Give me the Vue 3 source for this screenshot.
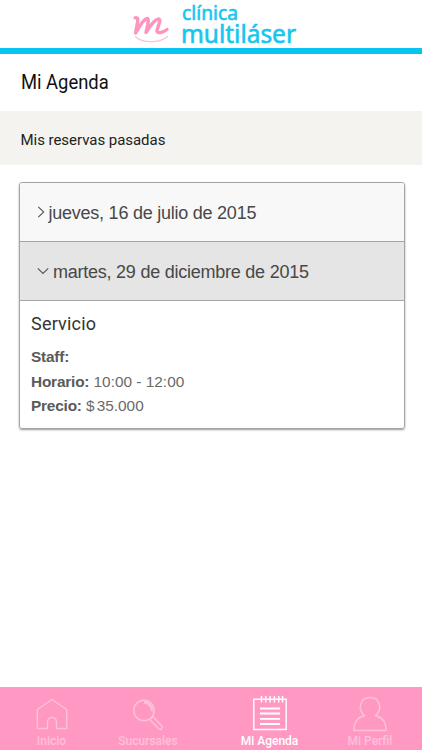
<template>
  <div class="app-screen">
    <header class="brand-bar">
      <svg class="brand-logo" viewBox="0 0 190 48" role="img" aria-label="clínica multiláser">
        <path class="brand-m" d="M15 17.800 C17.800 17.300 18.200 18.500 17.600 22 L15.600 33 C19 27 23 19.500 27 18.500 C30 18.200 27 27 26 32.500 C30 26 35 19 39 19 C41.500 20 37 28 37 31 C38 34 43 32.500 47 29.500" />
        <path class="brand-smile" d="M15 36.500 C22 43 39 44 48 36" />
        <text x="62" y="20" class="brand-small" textLength="56" lengthAdjust="spacingAndGlyphs">clínica</text>
        <text x="61" y="42.800" class="brand-large" textLength="115" lengthAdjust="spacingAndGlyphs">multiláser</text>
      </svg>
    </header>

    <h1 class="page-title"><span class="page-title-text">Mi Agenda</span></h1>
    <div class="section-bar">Mis reservas pasadas</div>

    <main class="content">
      <div class="accordion">
        <div v-for="(item, idx) in reservas" :key="item.fecha" class="accordion-item">
          <button class="accordion-header" :class="{ open: abierta === idx }" @click="toggle(idx)">
            <svg v-if="abierta === idx" class="chevron-down" viewBox="0 0 12 8">
              <path d="M.8 1.300 L6 6.500 L11.200 1.300" />
            </svg>
            <svg v-else class="chevron-right" viewBox="0 0 8 12">
              <path d="M1.300 .8 L6.700 6 L1.300 11.200" />
            </svg>
            <span class="fecha">{{ item.fecha }}</span>
          </button>
          <div v-if="abierta === idx" class="accordion-body">
            <h2>Servicio</h2>
            <p><b>Staff:</b> {{ item.staff }}</p>
            <p><b>Horario:</b> {{ item.horario }}</p>
            <p><b>Precio:</b> <span class="peso">$</span>{{ item.precio }}</p>
          </div>
        </div>
      </div>
    </main>

    <nav class="tab-bar">
      <a
        v-for="tab in tabs"
        :key="tab.id"
        class="tab"
        :class="{ active: tab.id === activeTab }"
        @click="activeTab = tab.id"
      >
        <svg v-if="tab.id === 'inicio'" viewBox="0 0 36 38">
          <path d="M3.300 33.500 V14.500 L18 4.500 L32.700 14.500 V33.500 H22.500 V27 C22.500 21 13.500 21 13.500 27 V33.500 Z" />
        </svg>
        <svg v-else-if="tab.id === 'sucursales'" viewBox="0 0 36 38">
          <circle cx="14" cy="15.500" r="10.200" />
          <path d="M14 7 C19 8 22 11 22 16" class="glare" />
          <path d="M19.800 24.500 L23 21.500 L31.800 31 C33.300 33 31 35.500 29 34 Z" />
        </svg>
        <svg v-else-if="tab.id === 'agenda'" viewBox="0 0 36 38">
          <path d="M1.800 4.300 H34.200 V34.500 H1.800 Z" />
          <path d="M9.500 1 V7.500 M13.800 1 V7.500 M18.100 1 V7.500 M22.400 1 V7.500 M26.700 1 V7.500 M30.500 1 V7.500" />
          <path d="M8 13.500 H28 M8 18.500 H28 M8 23.800 H28 M8 29 H28" class="lines" />
        </svg>
        <svg v-else viewBox="0 0 36 38">
          <path d="M2 35.500 C2 27 5 23 12.500 20.500 C5.500 15 7.500 2.500 18 2.500 C28.500 2.500 30.500 15 23.500 20.500 C31 23 34 27 34 35.500 Z" />
        </svg>
        <span class="tab-label">{{ tab.label }}</span>
      </a>
    </nav>
  </div>
</template>

<script setup>
import { ref } from 'vue'

const reservas = [
  { fecha: 'jueves, 16 de julio de 2015' },
  { fecha: 'martes, 29 de diciembre de 2015', staff: '', horario: '10:00 - 12:00', precio: '35.000' }
]

const tabs = [
  { id: 'inicio', label: 'Inicio' },
  { id: 'sucursales', label: 'Sucursales' },
  { id: 'agenda', label: 'Mi Agenda' },
  { id: 'perfil', label: 'Mi Perfil' }
]

const abierta = ref(1)
const activeTab = ref('agenda')

const toggle = (idx) => {
  abierta.value = abierta.value === idx ? null : idx
}
</script>

<style>
body {
  margin: 0;
  background: #fff;
}
</style>

<style scoped>
.app-screen {
  display: flex;
  flex-direction: column;
  height: 750px;
  overflow: hidden;
  font-family: Roboto, sans-serif;
  background: #fff;
}

.brand-bar {
  box-sizing: border-box;
  height: 54px;
  padding-left: 120px;
  border-bottom: 6px solid #07c5ef;
}

.brand-logo {
  display: block;
  width: 190px;
  height: 48px;
}

.brand-logo text {
  fill: #16c6f0;
  stroke: #16c6f0;
  stroke-width: 0.6;
  font-family: "Noto Sans", "Open Sans", sans-serif;
}

.brand-small {
  font-size: 19.5px;
}

.brand-large {
  font-size: 25px;
}

.brand-m {
  fill: none;
  stroke: #ff94c0;
  stroke-width: 3.4;
  stroke-linecap: round;
  stroke-linejoin: round;
}

.brand-smile {
  fill: none;
  stroke: #ffc0da;
  stroke-width: 1.2;
}

.page-title {
  height: 57px;
  margin: 0;
  padding-left: 20.5px;
  font-size: 20px;
  font-weight: 400;
  line-height: 57px;
  color: #111;
}

.page-title-text {
  display: inline-block;
  transform: scaleX(0.92);
  transform-origin: left;
}

.section-bar {
  height: 54px;
  padding-left: 20.5px;
  font-size: 15px;
  line-height: 58px;
  letter-spacing: -0.04px;
  color: #222;
  background: #f4f3ef;
}

.content {
  flex: 1;
  padding: 17px 17px 0 19px;
}

.accordion {
  border: 1px solid #a5a5a5;
  border-radius: 3px;
  box-shadow: 0 1px 2px rgba(0, 0, 0, 0.4);
  overflow: hidden;
}

.accordion-header {
  display: flex;
  align-items: center;
  box-sizing: border-box;
  width: 100%;
  height: 59px;
  padding: 0 0 0 16.5px;
  border: 0;
  border-bottom: 1px solid #a5a5a5;
  font-family: "Liberation Sans", Arial, sans-serif;
  font-size: 18px;
  letter-spacing: -0.24px;
  color: #484848;
  background: #f8f8f8;
}

.accordion-header.open {
  background: #e5e5e5;
}

.accordion-header svg {
  fill: none;
  stroke: #555;
  stroke-width: 1.1;
}

.chevron-right {
  width: 8px;
  height: 12px;
  margin-right: 4px;
}

.chevron-down {
  width: 12px;
  height: 8px;
  margin-right: 4.5px;
}

.fecha {
  padding-top: 2px;
}

.accordion-body {
  padding: 10px 11px 9px;
  font-family: "Liberation Sans", Arial, sans-serif;
  font-size: 15.4px;
  color: #6a6a6a;
}

.accordion-body h2 {
  margin: 0 0 8px;
  font-family: Roboto, sans-serif;
  font-size: 18px;
  font-weight: 400;
  line-height: 26px;
  letter-spacing: 0.2px;
  color: #333;
}

.accordion-body p {
  margin: 0;
  line-height: 24.500px;
}

.accordion-body b {
  letter-spacing: -0.2px;
  color: #5a5a5a;
}

.peso {
  margin-right: 2px;
}

.tab-bar {
  display: grid;
  grid-template-columns: 103px 90px 153px 48px;
  height: 63px;
  background: #ff99c4;
}

.tab {
  display: flex;
  flex-direction: column;
  align-items: center;
  padding-top: 8px;
  color: #ffc0da;
}

.tab.active {
  color: #fff;
}

.tab svg {
  width: 36px;
  height: 38px;
  fill: none;
  stroke: currentColor;
  stroke-width: 1.4;
}

.tab svg .glare {
  stroke-width: 2.4;
}

.tab svg .lines {
  stroke-width: 1.8;
}

.tab-label {
  font-size: 12px;
  font-weight: 500;
  line-height: 16px;
  white-space: nowrap;
}
</style>
